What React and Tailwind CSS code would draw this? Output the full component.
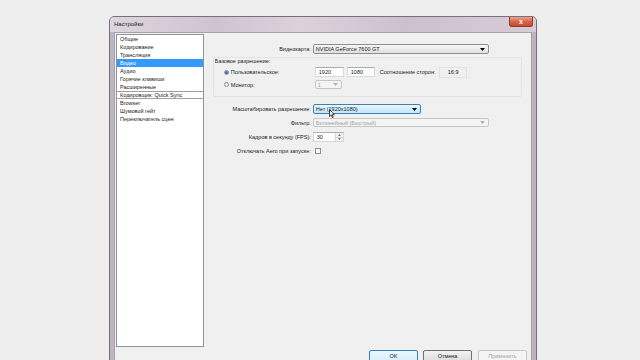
import React from 'react';

const font = { fontFamily: '"Liberation Sans", Arial, sans-serif' };

const pages = [
  'Общие',
  'Кодирование',
  'Трансляция',
  'Видео',
  'Аудио',
  'Горячие клавиши',
  'Расширенные',
  'Кодировщик: Quick Sync',
  'Browser',
  'Шумовой гейт',
  'Переключатель сцен',
];

const Arrow = ({ color = '#000' }) => (
  <svg width="5" height="3" viewBox="0 0 5 3" className="shrink-0">
    <path d="M0 0h5L2.5 3z" fill={color} />
  </svg>
);

const Combo = ({ text, w, h = 'h-[10px]', variant = 'normal' }) => {
  const styles = {
    normal: 'bg-[linear-gradient(#f6f6f6,#e0e0e0)] border-[#8e8f8f] text-[#1a1a1a]',
    hover: 'bg-[linear-gradient(#eaf6fd,#bee6fd)] border-[#3c7fb1] text-[#1a1a1a]',
    disabled: 'bg-[#f4f4f4] border-[#c4c6c8] text-[#a3a3a3]',
  };
  return (
    <div className={`${w} ${h} ${styles[variant]} border rounded-[2px] flex items-center justify-between pl-[2px] pr-[3px]`}>
      <span className="text-[5.5px] leading-[6px] whitespace-nowrap">{text}</span>
      <Arrow color={variant === 'disabled' ? '#b0b0b0' : '#000'} />
    </div>
  );
};

const Label = ({ children }) => (
  <div className="w-[107px] pr-[2px] text-right text-[5.5px] leading-[6px] whitespace-nowrap text-[#1a1a1a]">{children}</div>
);

const Radio = ({ checked }) => (
  <div className="w-[5px] h-[5px] rounded-full border border-[#8e8f8f] bg-[#f4f4f4] flex items-center justify-center">
    {checked && <div className="w-[3px] h-[3px] rounded-full bg-[#3a6ea5]" />}
  </div>
);

export default function App() {
  return (
    <div className="w-[640px] h-[360px] overflow-hidden bg-[#eeeeee] pt-[16px] pl-[109px] text-[#1a1a1a]" style={font}>
      {/* окно */}
      <div className="relative w-[428px] h-[360px] rounded-t-[5px] border border-[#75717b] bg-[linear-gradient(90deg,#bdb5c0,#cbc2cc_40%,#c6bcc8_70%,#bcb3bf)] flex flex-col">
        <div className="h-[15px] flex items-start bg-[linear-gradient(90deg,#ddd6de,#cfc3d0_25%,#dcd2db_45%,#cdc0cd_70%,#d6ccd6)] rounded-t-[4px]">
          <span className="pl-[4px] pt-[4px] text-[6px] leading-[7px] text-[#222]">Настройки</span>
          <div className="ml-auto mr-[3px] w-[24px] h-[10px] rounded-b-[3px] border border-[#8d3a2c] border-t-0 bg-[linear-gradient(#eba48f,#d9644a_50%,#c94a31)] flex items-center justify-center">
            <span className="text-white text-[7px] leading-[7px] font-bold">x</span>
          </div>
        </div>

        {/* клиентская область */}
        <div className="mx-[4px] flex-1 bg-[#f0f0f0] border border-[#a7a1ab] flex flex-col">
          <div className="flex pl-[1px] pt-[1px]">
            <div className="w-[88px] h-[313px] bg-white border border-[#8f939a]">
              {pages.map((p) => (
                <div
                  key={p}
                  className={`h-[8px] pl-[3px] text-[5.5px] whitespace-nowrap ${
                    p === 'Видео'
                      ? 'bg-[#3399ff] text-white leading-[8px]'
                      : p.startsWith('Кодировщик')
                      ? 'border-y border-[#a0a0a0] leading-[6px]'
                      : 'leading-[8px]'
                  }`}
                >
                  {p}
                </div>
              ))}
            </div>

            <div className="ml-[2px] w-[326px] flex flex-col">
              <div className="mt-[10px] flex items-center">
                <Label>Видеокарта:</Label>
                <Combo text="NVIDIA GeForce 7600 GT" w="w-[176px]" />
              </div>

              <div className="mt-[3px] ml-[7px] w-[309px] h-[40px] border border-[#e4e4e4] rounded-[2px] flex flex-col">
                <div className="pl-[1px] text-[5.5px] leading-[7px]">Базовое разрешение:</div>
                <div className="mt-[2px] h-[10px] flex items-center">
                  <div className="w-[101px] pl-[10px] flex items-center gap-[2px]">
                    <Radio checked />
                    <span className="text-[5.5px] leading-[6px]">Пользовательское:</span>
                  </div>
                  <div className="w-[29px] h-[10px] bg-white border border-[#d5d8dc] border-t-[#abadb3] text-[5.5px] leading-[8px] pl-[3px]">1920</div>
                  <div className="ml-[3px] w-[28px] h-[10px] bg-white border border-[#d5d8dc] border-t-[#abadb3] text-[5.5px] leading-[8px] pl-[3px]">1080</div>
                  <span className="ml-[5px] w-[59px] text-[5.5px] leading-[6px] whitespace-nowrap">Соотношение сторон:</span>
                  <div className="w-[28px] h-[11px] border border-[#e2e2e2] text-[5.5px] leading-[9px] pl-[8px]">16:9</div>
                </div>
                <div className="mt-[3px] h-[9px] flex items-center">
                  <div className="w-[101px] pl-[10px] flex items-center gap-[2px]">
                    <Radio />
                    <span className="text-[5.5px] leading-[6px]">Монитор:</span>
                  </div>
                  <Combo text="1" w="w-[27px]" h="h-[9px]" variant="disabled" />
                </div>
              </div>

              <div className="relative mt-[7px] flex items-center">
                <Label>Масштабировать разрешение:</Label>
                <Combo text="Нет (1920x1080)" w="w-[108px]" variant="hover" />
                {/* курсор */}
                <svg width="6" height="9" viewBox="0 0 6 9" className="absolute left-[123px] top-[5px]">
                  <path d="M0.5 0.5v7l1.6-1.5 1.2 2.6 1-.5-1.2-2.5h2.2z" fill="#fff" stroke="#000" strokeWidth="0.7" />
                </svg>
              </div>

              <div className="mt-[4px] flex items-center">
                <Label>Фильтр:</Label>
                <Combo text="Билинейный (Быстрый)" w="w-[176px]" h="h-[9px]" variant="disabled" />
              </div>

              <div className="mt-[5px] flex items-center">
                <Label>Кадров в секунду (FPS):</Label>
                <div className="w-[31px] h-[10px] flex bg-white border border-[#d5d8dc] border-t-[#abadb3]">
                  <span className="flex-1 text-[5.5px] leading-[8px] pl-[3px]">30</span>
                  <div className="w-[8px] flex flex-col border-l border-[#d5d5d5]">
                    <div className="flex-1 bg-[#f3f3f3] border-b border-[#d5d5d5] flex items-center justify-center">
                      <svg width="3" height="2" viewBox="0 0 3 2"><path d="M0 2h3L1.5 0z" fill="#777" /></svg>
                    </div>
                    <div className="flex-1 bg-[#f3f3f3] flex items-center justify-center">
                      <svg width="3" height="2" viewBox="0 0 3 2"><path d="M0 0h3L1.5 2z" fill="#777" /></svg>
                    </div>
                  </div>
                </div>
              </div>

              <div className="mt-[6px] flex items-center">
                <Label>Отключать Aero при запуске:</Label>
                <div className="ml-[2px] w-[6px] h-[6px] border border-[#8e8f8f] bg-[#f6f6f6]" />
              </div>
            </div>
          </div>

          <div className="mt-[3px] pr-[4px] flex justify-end">
            <button className="w-[49px] h-[12px] rounded-[2px] border border-[#3c7fb1] bg-[linear-gradient(#eaf6fd,#d9f0fc)] text-[5.5px] leading-[10px] text-[#1a1a1a]">OK</button>
            <button className="ml-[5px] w-[49px] h-[12px] rounded-[2px] border border-[#707070] bg-[linear-gradient(#f2f2f2,#dddddd)] text-[5.5px] leading-[10px] text-[#1a1a1a]">Отмена</button>
            <button className="ml-[6px] w-[49px] h-[12px] rounded-[2px] border border-[#c4c6c8] bg-[#f4f4f4] text-[5.5px] leading-[10px] text-[#a3a3a3]">Применить</button>
          </div>
        </div>
      </div>
    </div>
  );
}
